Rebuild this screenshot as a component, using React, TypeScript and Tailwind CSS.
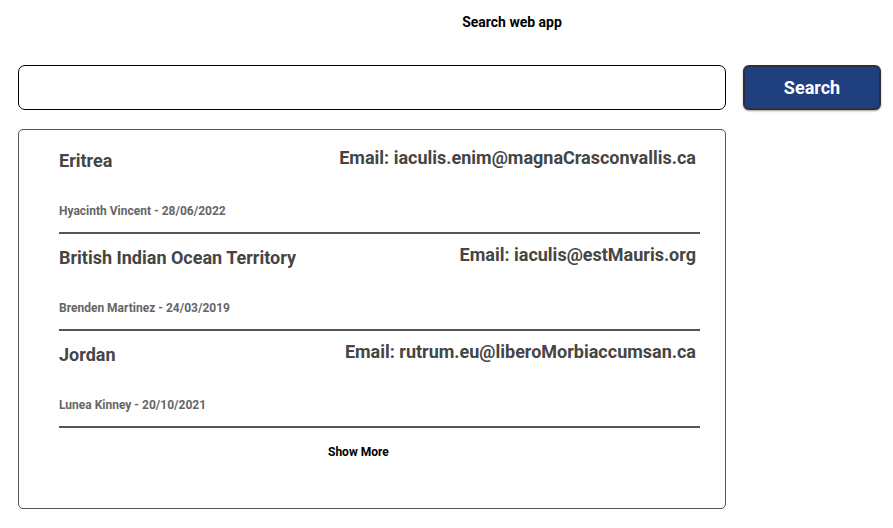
const rows = [
  {
    country: "Eritrea",
    email: "iaculis.enim@magnaCrasconvallis.ca",
    name: "Hyacinth Vincent",
    date: "28/06/2022",
  },
  {
    country: "British Indian Ocean Territory",
    email: "iaculis@estMauris.org",
    name: "Brenden Martinez",
    date: "24/03/2019",
  },
  {
    country: "Jordan",
    email: "rutrum.eu@liberoMorbiaccumsan.ca",
    name: "Lunea Kinney",
    date: "20/10/2021",
  },
];

function ResultRow({ row }: { row: (typeof rows)[number] }) {
  return (
    <li className="border-b-2 border-[#555555] pr-[4px] pt-[8px]">
      <div className="flex items-start justify-between">
        <h3 className="mt-[2px] text-[18px] leading-[27px] font-bold text-[#454545]">{row.country}</h3>
        <p className="mt-[-1px] text-[18px] leading-[27px] font-bold text-[#454545]">Email: {row.email}</p>
      </div>
      <p className="mt-[29px] pb-[13px] text-[12px] leading-[16px] font-bold text-[#666666]">
        {row.name} - {row.date}
      </p>
    </li>
  );
}

export default function App() {
  return (
    <div className="w-full min-h-screen overflow-hidden bg-white font-['Roboto',sans-serif]">
      <header className="w-[1024px] pt-[13px] text-center">
        <h1 className="text-[14px] leading-[18px] font-bold text-black">Search web app</h1>
      </header>

      <div className="mt-[34px] flex items-start gap-[17px] pl-[18px]">
        <div className="w-[708px]">
          <input
            type="text"
            className="block h-[45px] w-full rounded-[7px] border border-black px-3 text-[16px] outline-none"
          />
          <div className="mt-[19px] h-[380px] rounded-[5px] border border-[#555555] pl-[40px] pr-[25px] pt-[7px]">
            <ul>
              {rows.map((r) => (
                <ResultRow key={r.country} row={r} />
              ))}
            </ul>
            <button className="mt-[16px] ml-[269px] text-[12px] leading-[16px] font-bold text-black">
              Show More
            </button>
          </div>
        </div>
        <button className="h-[45px] w-[138px] rounded-[6px] border-2 border-[#2c3140] bg-[#1f3f7f] text-[18px] font-bold text-white shadow-[0_1px_2px_rgba(0,0,0,0.4)]">
          Search
        </button>
      </div>
    </div>
  );
}
